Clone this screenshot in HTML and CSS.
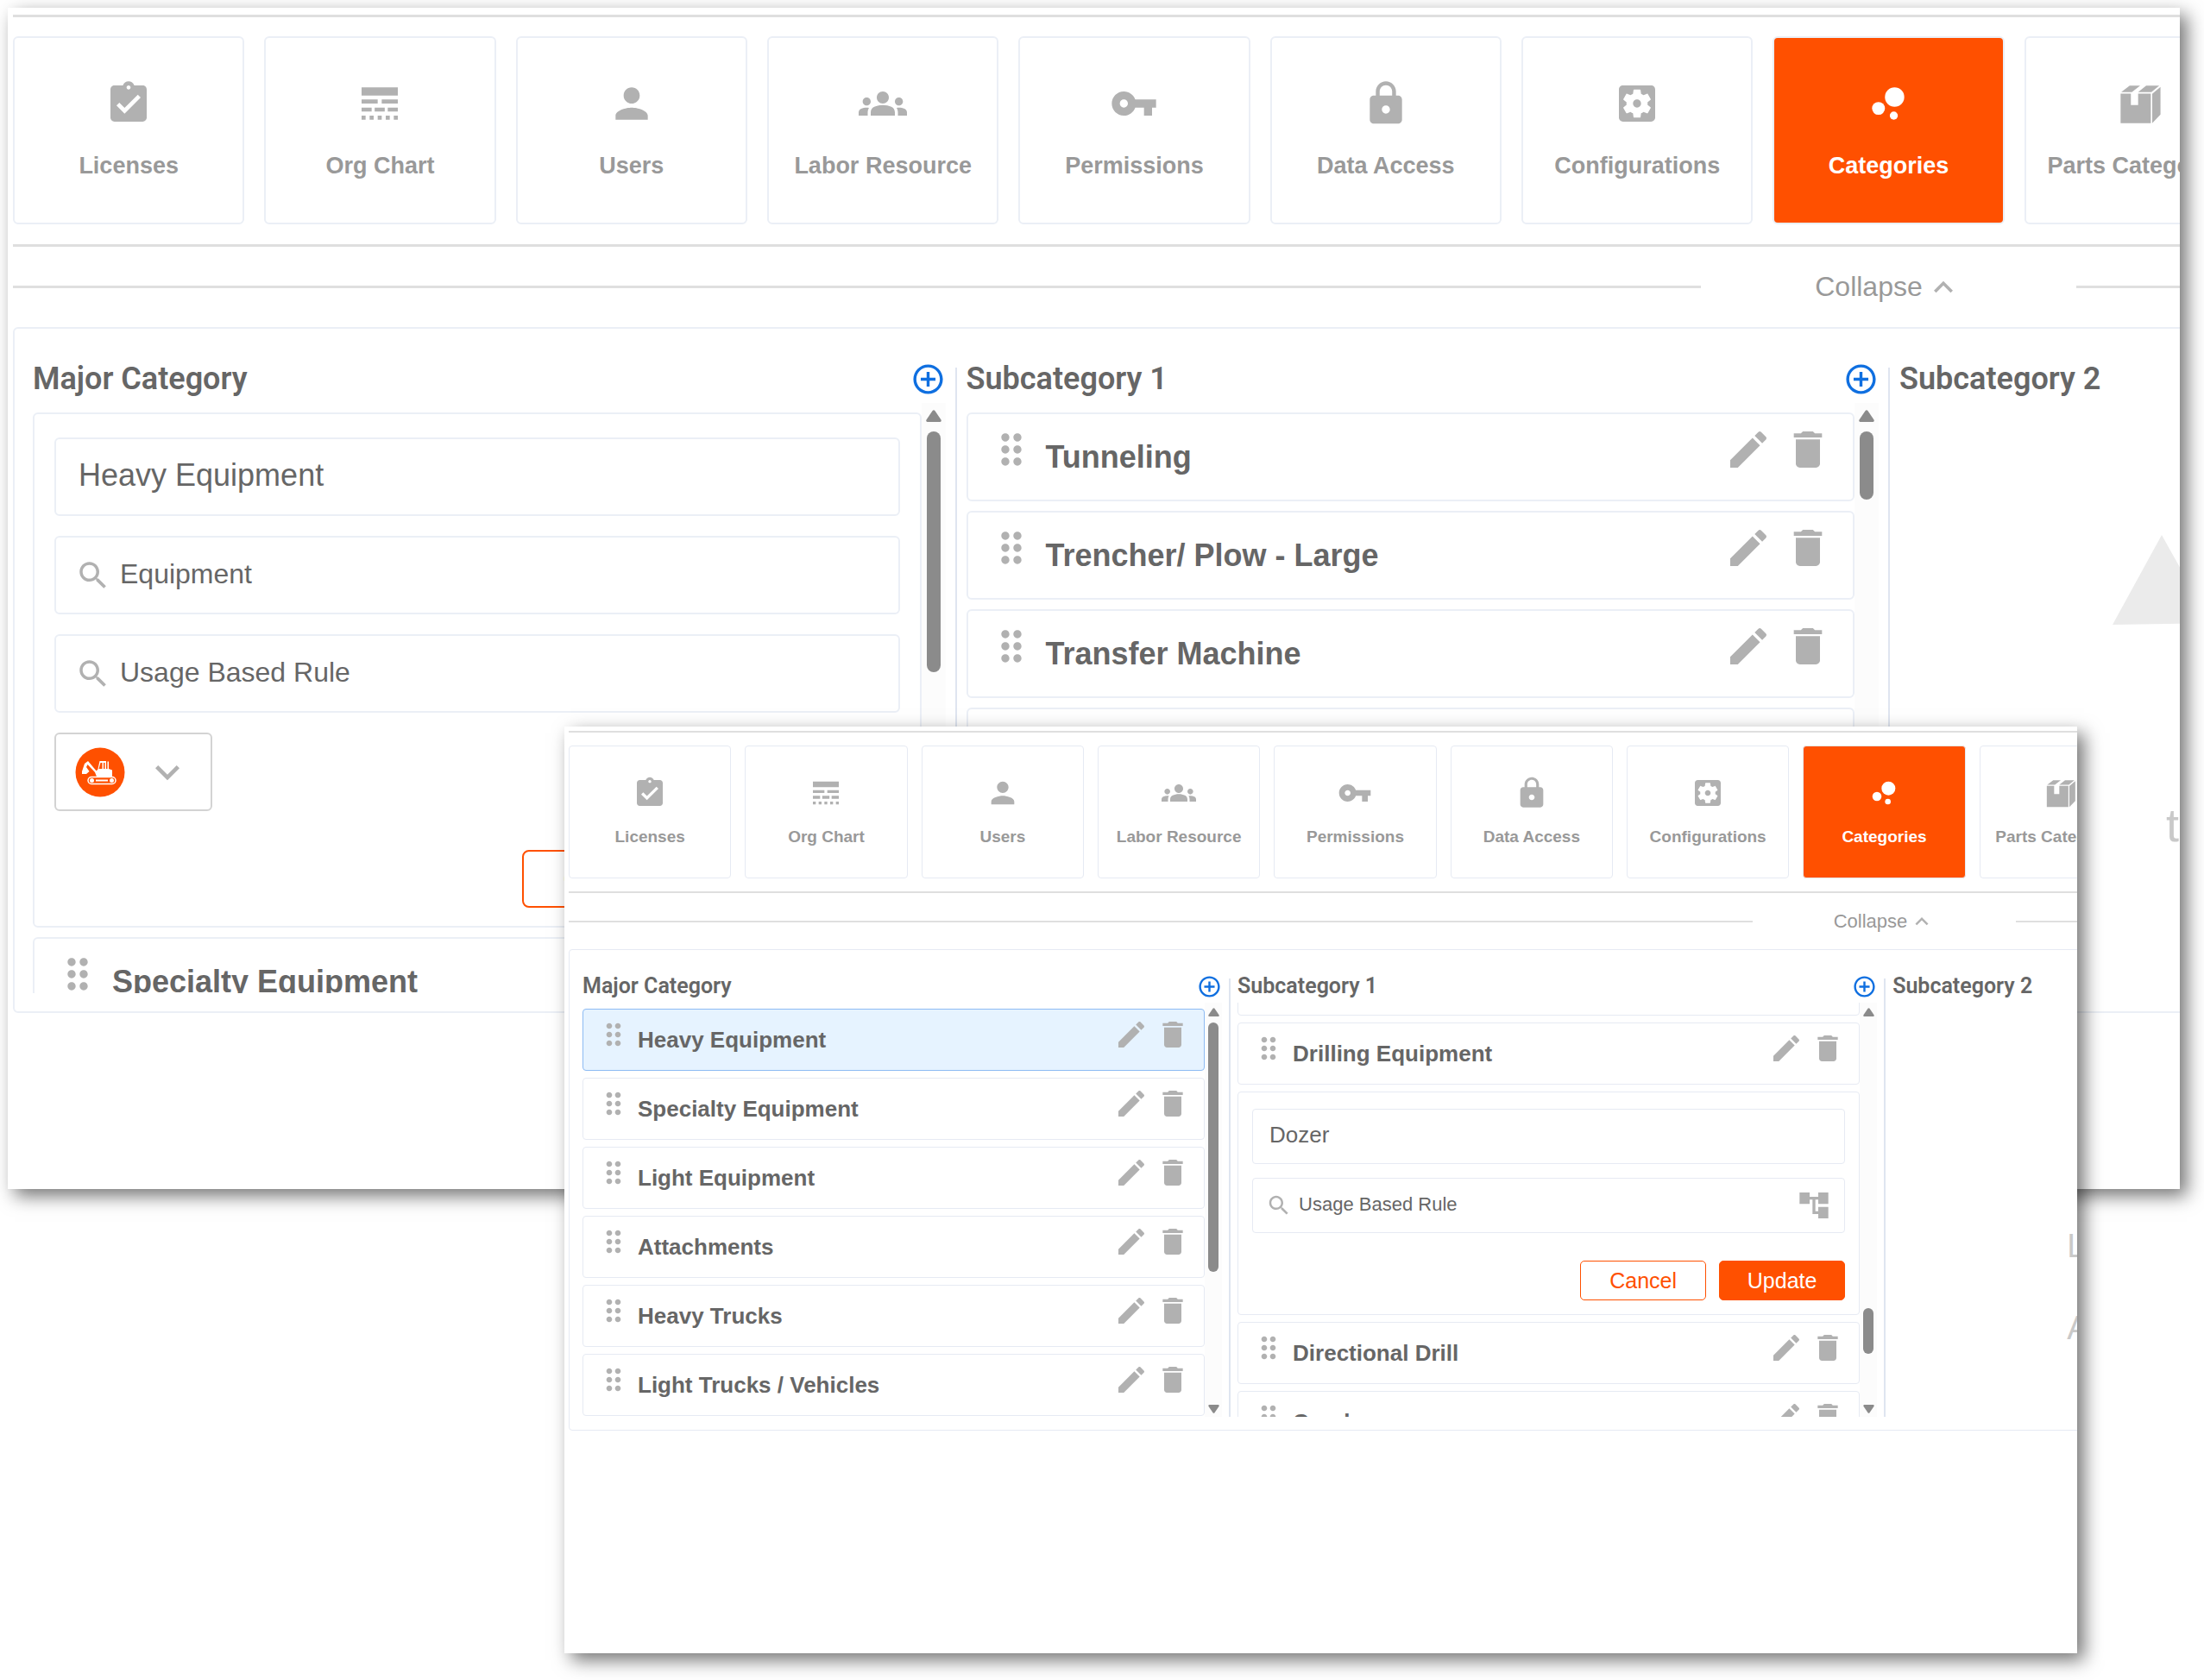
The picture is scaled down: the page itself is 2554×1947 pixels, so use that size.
FILE: index.html
```html
<!DOCTYPE html>
<html lang="en">
<head>
  <meta charset="UTF-8">
  <title>Categories</title>
  <link rel="stylesheet" href="styles.css">
</head>
<body>

  <!-- shared icons -->
  <svg class="sprite" aria-hidden="true">
    <symbol id="i-licenses" viewBox="0 0 24 24"><path d="M19 3h-4.18C14.4 1.84 13.3 1 12 1s-2.4.84-2.82 2H5c-1.1 0-2 .9-2 2v14c0 1.1.9 2 2 2h14c1.1 0 2-.9 2-2V5c0-1.1-.9-2-2-2zm-7 0c.55 0 1 .45 1 1s-.45 1-1 1-1-.45-1-1 .45-1 1-1zm-2 14l-4-4 1.41-1.41L10 14.17l6.59-6.59L18 9l-8 8z"/></symbol>
    <symbol id="i-org" viewBox="0 0 24 24"><path d="M3 16h5v-2H3v2zm6.5 0h5v-2h-5v2zm6.5 0h5v-2h-5v2zM3 20h2v-2H3v2zm4 0h2v-2H7v2zm4 0h2v-2h-2v2zm4 0h2v-2h-2v2zm4 0h2v-2h-2v2zM3 12h8v-2H3v2zm10 0h8v-2h-8v2zM3 4v4h18V4H3z"/></symbol>
    <symbol id="i-user" viewBox="0 0 24 24"><path d="M12 12c2.21 0 4-1.79 4-4s-1.79-4-4-4-4 1.79-4 4 1.79 4 4 4zm0 2c-2.67 0-8 1.34-8 4v2h16v-2c0-2.66-5.33-4-8-4z"/></symbol>
    <symbol id="i-labor" viewBox="0 0 24 24"><path d="M12 12.75c1.63 0 3.07.39 4.24.9 1.08.48 1.76 1.56 1.76 2.73V18H6v-1.61c0-1.18.68-2.26 1.76-2.73 1.17-.52 2.61-.91 4.24-.91zM4 13c1.1 0 2-.9 2-2s-.9-2-2-2-2 .9-2 2 .9 2 2 2zm1.13 1.1c-.37-.06-.74-.1-1.13-.1-.99 0-1.93.21-2.78.58C.48 14.9 0 15.62 0 16.43V18h4.5v-1.61c0-.83.23-1.61.63-2.29zM20 13c1.1 0 2-.9 2-2s-.9-2-2-2-2 .9-2 2 .9 2 2 2zm4 3.43c0-.81-.48-1.53-1.22-1.85-.85-.37-1.79-.58-2.78-.58-.39 0-.76.04-1.13.1.4.68.63 1.46.63 2.29V18H24v-1.57zM12 6c1.66 0 3 1.34 3 3s-1.34 3-3 3-3-1.34-3-3 1.34-3 3-3z"/></symbol>
    <symbol id="i-key" viewBox="0 0 24 24"><path d="M12.65 10C11.83 7.67 9.61 6 7 6c-3.31 0-6 2.69-6 6s2.69 6 6 6c2.61 0 4.83-1.67 5.65-4H17v4h4v-4h2v-4H12.65zM7 14c-1.1 0-2-.9-2-2s.9-2 2-2 2 .9 2 2-.9 2-2 2z"/></symbol>
    <symbol id="i-lock" viewBox="0 0 24 24"><path d="M18 8h-1V6c0-2.76-2.24-5-5-5S7 3.24 7 6v2H6c-1.1 0-2 .9-2 2v10c0 1.1.9 2 2 2h12c1.1 0 2-.9 2-2V10c0-1.1-.9-2-2-2zm-6 9c-1.1 0-2-.9-2-2s.9-2 2-2 2 .9 2 2-.9 2-2 2zm3.1-9H8.9V6c0-1.71 1.39-3.1 3.1-3.1 1.71 0 3.1 1.39 3.1 3.1v2z"/></symbol>
    <symbol id="i-config" viewBox="0 0 24 24"><path d="M12 10c-1.1 0-2 .9-2 2s.9 2 2 2 2-.9 2-2-.9-2-2-2zm7-7H5c-1.11 0-2 .9-2 2v14c0 1.1.89 2 2 2h14c1.11 0 2-.9 2-2V5c0-1.1-.89-2-2-2zm-1.75 9c0 .23-.02.46-.05.68l1.48 1.16c.13.11.17.3.08.45l-1.4 2.42c-.09.15-.27.21-.43.15l-1.74-.7c-.36.28-.76.51-1.18.69l-.26 1.85c-.03.17-.18.3-.35.3h-2.8c-.17 0-.32-.13-.35-.29l-.26-1.85c-.43-.18-.82-.41-1.18-.69l-1.74.7c-.16.06-.34 0-.43-.15l-1.4-2.42c-.09-.15-.05-.34.08-.45l1.48-1.16c-.03-.23-.05-.46-.05-.69 0-.23.02-.46.05-.68l-1.48-1.16c-.13-.11-.17-.3-.08-.45l1.4-2.42c.09-.15.27-.21.43-.15l1.74.7c.36-.28.76-.51 1.18-.69l.26-1.85c.03-.17.18-.3.35-.3h2.8c.17 0 .32.13.35.29l.26 1.85c.43.18.82.41 1.18.69l1.74-.7c.16-.06.34 0 .43.15l1.4 2.42c.09.15.05.34-.08.45l-1.48 1.16c.03.23.05.46.05.69z"/></symbol>
    <symbol id="i-bubbles" viewBox="0 0 24 24"><circle cx="7.2" cy="14.4" r="3.2"/><circle cx="14.8" cy="18" r="2"/><circle cx="15.2" cy="8.8" r="4.8"/></symbol>
    <symbol id="i-box" viewBox="0 0 24 24"><path d="M2.3 7.1h5.1v5.6H11V7.1h6.3v14.6h-15zM18 7.2l4.1-3.5v13.8L18 21.7zM2.6 6.3l4.2-3.2H12L7.9 6.3zM11 6.3l4-3.2h6.5l-3.9 3.2z"/></symbol>
    <symbol id="i-up" viewBox="0 0 24 24"><path d="M12 8l-6 6 1.41 1.41L12 10.83l4.59 4.58L18 14z"/></symbol>
    <symbol id="i-down" viewBox="0 0 24 24"><path d="M16.59 8.59L12 13.17 7.41 8.59 6 10l6 6 6-6z"/></symbol>
    <symbol id="i-add" viewBox="0 0 24 24"><path d="M13 7h-2v4H7v2h4v4h2v-4h4v-2h-4V7zm-1-5C6.48 2 2 6.48 2 12s4.48 10 10 10 10-4.48 10-10S17.52 2 12 2zm0 18c-4.41 0-8-3.59-8-8s3.59-8 8-8 8 3.59 8 8-3.59 8-8 8z"/></symbol>
    <symbol id="i-drag" viewBox="0 0 24 24"><path d="M11 18c0 1.1-.9 2-2 2s-2-.9-2-2 .9-2 2-2 2 .9 2 2zm-2-8c-1.1 0-2 .9-2 2s.9 2 2 2 2-.9 2-2-.9-2-2-2zm0-6c-1.1 0-2 .9-2 2s.9 2 2 2 2-.9 2-2-.9-2-2-2zm6 4c1.1 0 2-.9 2-2s-.9-2-2-2-2 .9-2 2 .9 2 2 2zm0 2c-1.1 0-2 .9-2 2s.9 2 2 2 2-.9 2-2-.9-2-2-2zm0 6c-1.1 0-2 .9-2 2s.9 2 2 2 2-.9 2-2-.9-2-2-2z"/></symbol>
    <symbol id="i-edit" viewBox="0 0 24 24"><path d="M3 17.25V21h3.75L17.81 9.94l-3.75-3.75L3 17.25zM20.71 7.04c.39-.39.39-1.02 0-1.41l-2.34-2.34c-.39-.39-1.02-.39-1.41 0l-1.83 1.83 3.75 3.75 1.83-1.83z"/></symbol>
    <symbol id="i-trash" viewBox="0 0 24 24"><path d="M6 19c0 1.1.9 2 2 2h8c1.1 0 2-.9 2-2V7H6v12zM19 4h-3.5l-1-1h-5l-1 1H5v2h14V4z"/></symbol>
    <symbol id="i-search" viewBox="0 0 24 24"><path d="M15.5 14h-.79l-.28-.27C15.41 12.59 16 11.11 16 9.5 16 5.91 13.09 3 9.5 3S3 5.91 3 9.5 5.91 16 9.5 16c1.61 0 3.09-.59 4.23-1.57l.27.28v.79l5 4.99L20.49 19l-4.99-5zm-6 0C7.01 14 5 11.99 5 9.5S7.01 5 9.5 5 14 7.01 14 9.5 11.99 14 9.5 14z"/></symbol>
    <symbol id="i-tree" viewBox="0 0 24 24"><path d="M22 11V3h-7v3H9V3H2v8h7V8h2v10h4v3h7v-8h-7v3h-2V8h2v3z"/></symbol>
    <symbol id="i-arrow-up" viewBox="0 0 18 14"><path d="M7.6 1Q9-.6 10.4 1L17.5 11.5Q18.3 13.5 16.5 14H1.5Q-.3 13.5.5 11.5z"/></symbol>
    <symbol id="i-arrow-down" viewBox="0 0 18 14"><path d="M7.6 13Q9 14.6 10.4 13L17.5 2.5Q18.3.5 16.5 0H1.5Q-.3.5.5 2.5z"/></symbol>
    <symbol id="i-excavator" viewBox="0 0 58 58">
      <circle cx="29" cy="29" r="28.5" fill="#ff5000"/>
      <g fill="#fff">
        <path d="M8 28l3-9 4-3 11 13h-3L14.5 20l-1.5 3 3.500 5-3.500 3H8z"/>
        <path d="M23 29l3.500-3.500V25L28.500 16H36v9h1.500v-8.500H39V25l4 1.500V34H25z"/>
        <path d="M29.500 18h2v7H27.500z" fill="#ff5000"/>
        <path d="M33 18h1.500v7H33z" fill="#ff5000"/>
      </g>
      <rect x="15" y="34.500" width="32" height="8" rx="4" fill="none" stroke="#fff" stroke-width="1.500"/>
      <circle cx="19.500" cy="38.500" r="2.500" fill="#fff"/><circle cx="42.500" cy="38.500" r="2.500" fill="#fff"/>
      <path d="M24 37.500h14v2H24z" fill="#fff"/>
    </symbol>
  </svg>

  <main class="window large">
    <nav class="tabs">
      <button class="tab"><svg class="icon"><use href="#i-licenses"/></svg><span>Licenses</span></button>
      <button class="tab"><svg class="icon"><use href="#i-org"/></svg><span>Org Chart</span></button>
      <button class="tab"><svg class="icon"><use href="#i-user"/></svg><span>Users</span></button>
      <button class="tab"><svg class="icon"><use href="#i-labor"/></svg><span>Labor Resource</span></button>
      <button class="tab"><svg class="icon"><use href="#i-key"/></svg><span>Permissions</span></button>
      <button class="tab"><svg class="icon"><use href="#i-lock"/></svg><span>Data Access</span></button>
      <button class="tab"><svg class="icon"><use href="#i-config"/></svg><span>Configurations</span></button>
      <button class="tab active"><svg class="icon"><use href="#i-bubbles"/></svg><span>Categories</span></button>
      <button class="tab"><svg class="icon"><use href="#i-box"/></svg><span>Parts Categories</span></button>
    </nav>
    <div class="collapse"><button>Collapse<svg><use href="#i-up"/></svg></button></div>

    <div class="panel">
      <section class="column">
        <header>
          <h2>Major Category</h2>
          <button class="add" aria-label="Add major category"><svg><use href="#i-add"/></svg></button>
        </header>
        <div class="scroll">
          <div class="list">
            <form class="edit">
              <div class="field"><input class="name" type="text" value="Heavy Equipment" aria-label="Name"></div>
              <div class="field"><svg class="search"><use href="#i-search"/></svg><input type="text" value="Equipment" aria-label="Type"></div>
              <div class="field"><svg class="search"><use href="#i-search"/></svg><input type="text" value="Usage Based Rule" aria-label="Rule"></div>
              <div class="picker">
                <svg class="picture"><use href="#i-excavator"/></svg>
                <svg class="icon"><use href="#i-down"/></svg>
                <select aria-label="Icon"><option>Excavator</option></select>
              </div>
              <div class="actions"><button type="button">Cancel</button><button type="button" class="primary">Update</button></div>
            </form>
            <div class="item">
              <svg class="icon"><use href="#i-drag"/></svg><span>Specialty Equipment</span>
              <button aria-label="Edit"><svg class="icon"><use href="#i-edit"/></svg></button><button aria-label="Delete"><svg class="icon"><use href="#i-trash"/></svg></button>
            </div>
          </div>
          <div class="scrollbar"><svg><use href="#i-arrow-up"/></svg><div class="track"><div class="thumb" style="height: 279px"></div></div><svg><use href="#i-arrow-down"/></svg></div>
        </div>
      </section>

      <section class="column">
        <header>
          <h2>Subcategory 1</h2>
          <button class="add" aria-label="Add subcategory"><svg><use href="#i-add"/></svg></button>
        </header>
        <div class="scroll">
          <div class="list">
            <div class="item">
              <svg class="icon"><use href="#i-drag"/></svg><span>Tunneling</span>
              <button aria-label="Edit"><svg class="icon"><use href="#i-edit"/></svg></button><button aria-label="Delete"><svg class="icon"><use href="#i-trash"/></svg></button>
            </div>
            <div class="item">
              <svg class="icon"><use href="#i-drag"/></svg><span>Trencher/ Plow - Large</span>
              <button aria-label="Edit"><svg class="icon"><use href="#i-edit"/></svg></button><button aria-label="Delete"><svg class="icon"><use href="#i-trash"/></svg></button>
            </div>
            <div class="item">
              <svg class="icon"><use href="#i-drag"/></svg><span>Transfer Machine</span>
              <button aria-label="Edit"><svg class="icon"><use href="#i-edit"/></svg></button><button aria-label="Delete"><svg class="icon"><use href="#i-trash"/></svg></button>
            </div>
            <div class="item"></div>
          </div>
          <div class="scrollbar"><svg><use href="#i-arrow-up"/></svg><div class="track"><div class="thumb" style="height: 79px"></div></div><svg><use href="#i-arrow-down"/></svg></div>
        </div>
      </section>

      <section class="column">
        <header><h2>Subcategory 2</h2></header>
        <div class="empty">
          <svg class="hint" viewBox="0 0 114 104"><path d="M57 0l57 102L0 104z"/></svg>
          <p>t</p>
        </div>
      </section>
    </div>
  </main>

  <div class="window small">
    <nav class="tabs">
      <button class="tab"><svg class="icon"><use href="#i-licenses"/></svg><span>Licenses</span></button>
      <button class="tab"><svg class="icon"><use href="#i-org"/></svg><span>Org Chart</span></button>
      <button class="tab"><svg class="icon"><use href="#i-user"/></svg><span>Users</span></button>
      <button class="tab"><svg class="icon"><use href="#i-labor"/></svg><span>Labor Resource</span></button>
      <button class="tab"><svg class="icon"><use href="#i-key"/></svg><span>Permissions</span></button>
      <button class="tab"><svg class="icon"><use href="#i-lock"/></svg><span>Data Access</span></button>
      <button class="tab"><svg class="icon"><use href="#i-config"/></svg><span>Configurations</span></button>
      <button class="tab active"><svg class="icon"><use href="#i-bubbles"/></svg><span>Categories</span></button>
      <button class="tab"><svg class="icon"><use href="#i-box"/></svg><span>Parts Categories</span></button>
    </nav>
    <div class="collapse"><button>Collapse<svg><use href="#i-up"/></svg></button></div>

    <div class="panel">
      <section class="column">
        <header>
          <h2>Major Category</h2>
          <button class="add" aria-label="Add major category"><svg><use href="#i-add"/></svg></button>
        </header>
        <div class="scroll">
          <div class="list">
            <div class="item selected">
              <svg class="icon"><use href="#i-drag"/></svg><span>Heavy Equipment</span>
              <button aria-label="Edit"><svg class="icon"><use href="#i-edit"/></svg></button><button aria-label="Delete"><svg class="icon"><use href="#i-trash"/></svg></button>
            </div>
            <div class="item">
              <svg class="icon"><use href="#i-drag"/></svg><span>Specialty Equipment</span>
              <button aria-label="Edit"><svg class="icon"><use href="#i-edit"/></svg></button><button aria-label="Delete"><svg class="icon"><use href="#i-trash"/></svg></button>
            </div>
            <div class="item">
              <svg class="icon"><use href="#i-drag"/></svg><span>Light Equipment</span>
              <button aria-label="Edit"><svg class="icon"><use href="#i-edit"/></svg></button><button aria-label="Delete"><svg class="icon"><use href="#i-trash"/></svg></button>
            </div>
            <div class="item">
              <svg class="icon"><use href="#i-drag"/></svg><span>Attachments</span>
              <button aria-label="Edit"><svg class="icon"><use href="#i-edit"/></svg></button><button aria-label="Delete"><svg class="icon"><use href="#i-trash"/></svg></button>
            </div>
            <div class="item">
              <svg class="icon"><use href="#i-drag"/></svg><span>Heavy Trucks</span>
              <button aria-label="Edit"><svg class="icon"><use href="#i-edit"/></svg></button><button aria-label="Delete"><svg class="icon"><use href="#i-trash"/></svg></button>
            </div>
            <div class="item">
              <svg class="icon"><use href="#i-drag"/></svg><span>Light Trucks / Vehicles</span>
              <button aria-label="Edit"><svg class="icon"><use href="#i-edit"/></svg></button><button aria-label="Delete"><svg class="icon"><use href="#i-trash"/></svg></button>
            </div>
          </div>
          <div class="scrollbar"><svg><use href="#i-arrow-up"/></svg><div class="track"><div class="thumb" style="height: 289px"></div></div><svg><use href="#i-arrow-down"/></svg></div>
        </div>
      </section>

      <section class="column">
        <header>
          <h2>Subcategory 1</h2>
          <button class="add" aria-label="Add subcategory"><svg><use href="#i-add"/></svg></button>
        </header>
        <div class="scroll">
          <div class="list scrolled">
            <div class="item"></div>
            <div class="item">
              <svg class="icon"><use href="#i-drag"/></svg><span>Drilling Equipment</span>
              <button aria-label="Edit"><svg class="icon"><use href="#i-edit"/></svg></button><button aria-label="Delete"><svg class="icon"><use href="#i-trash"/></svg></button>
            </div>
            <form class="edit">
              <div class="field"><input class="name" type="text" value="Dozer" aria-label="Name"></div>
              <div class="field"><svg class="search"><use href="#i-search"/></svg><input type="text" value="Usage Based Rule" aria-label="Rule"><svg class="icon"><use href="#i-tree"/></svg></div>
              <div class="actions"><button type="button">Cancel</button><button type="button" class="primary">Update</button></div>
            </form>
            <div class="item">
              <svg class="icon"><use href="#i-drag"/></svg><span>Directional Drill</span>
              <button aria-label="Edit"><svg class="icon"><use href="#i-edit"/></svg></button><button aria-label="Delete"><svg class="icon"><use href="#i-trash"/></svg></button>
            </div>
            <div class="item">
              <svg class="icon"><use href="#i-drag"/></svg><span>Crusher</span>
              <button aria-label="Edit"><svg class="icon"><use href="#i-edit"/></svg></button><button aria-label="Delete"><svg class="icon"><use href="#i-trash"/></svg></button>
            </div>
          </div>
          <div class="scrollbar"><svg><use href="#i-arrow-up"/></svg><div class="track"><div class="thumb" style="height: 53px; margin-top: 331px"></div></div><svg><use href="#i-arrow-down"/></svg></div>
        </div>
      </section>

      <section class="column">
        <header><h2>Subcategory 2</h2></header>
        <div class="empty">
          <p>L</p>
          <p>A</p>
        </div>
      </section>
    </div>
  </div>

</body>
</html>
```
FILE: styles.css
```css
* {
  box-sizing: border-box;
}

body {
  margin: 0;
  min-height: 100vh;
  padding: 9px 28px 0 9px;
  position: relative;
  background: #fff;
  color: #666;
  font-family: "Liberation Sans", Arial, sans-serif;
}

.sprite {
  position: absolute;
  width: 0;
  height: 0;
}

svg {
  display: block;
  flex: none;
  fill: #b1b1b1;
}

button {
  margin: 0;
  padding: 0;
  border: 0;
  background: none;
  font-family: inherit;
  cursor: pointer;
}

/* windows */
.window {
  background: #fff;
  overflow: hidden;
  box-shadow: 8px 8px 20px rgba(0, 0, 0, 0.55);
}

.large {
  --line: 3px;
  --border: 2px;
  --border-color: #ebeff6;
  --radius: 6px;
  --icon: 56px;
  --title: 36px;
  --text: 32px;
  --label: 27px;
  --gap: 11px;
  padding: 8px 0 204px 6px;
}

.small {
  --line: 2px;
  --border: 1px;
  --border-color: #e6eaf3;
  --radius: 4px;
  --icon: 40px;
  --title: 26px;
  --text: 22px;
  --label: 19px;
  --gap: 8px;
  position: absolute;
  top: 842px;
  left: 654px;
  right: 147px;
  padding: 5px 0 258px 5px;
}

.icon {
  width: var(--icon);
  height: var(--icon);
}

/* tabs */
.tabs {
  display: grid;
  grid-template-columns: repeat(9, 1fr);
  gap: 23px;
  padding: 22px 0 23px;
  margin-right: -88px;
  border-top: var(--line) solid #dfdfdf;
  border-bottom: var(--line) solid #dfdfdf;
}

.tab {
  display: flex;
  flex-direction: column;
  align-items: center;
  gap: 28px;
  height: 218px;
  padding-top: 48px;
  border: var(--border) solid var(--border-color);
  border-radius: var(--radius);
  color: #999;
  font-size: var(--label);
  font-weight: bold;
  line-height: 32px;
  white-space: nowrap;
}

.tab.active {
  background: #ff5000;
  color: #fff;
}

.tab.active svg {
  fill: #fff;
}

.small .tabs {
  gap: 16px;
  padding: 15px 0;
  margin-right: -75px;
}

.small .tab {
  gap: 20px;
  height: 154px;
  padding-top: 34px;
  line-height: 22px;
}

/* collapse divider */
.collapse {
  display: flex;
  align-items: center;
  height: 93px;
}

.collapse::before,
.collapse::after {
  content: "";
  flex: 1;
  height: var(--line);
  background: #dfdfdf;
}

.collapse::after {
  flex: 0 0 120px;
}

.collapse button {
  display: flex;
  align-items: center;
  justify-content: center;
  gap: 2px;
  width: 435px;
  color: #999;
  font-size: var(--text);
}

.collapse svg {
  width: 44px;
  height: 44px;
}

.small .collapse {
  height: 65px;
}

.small .collapse::after {
  flex-basis: 71px;
}

.small .collapse button {
  width: 305px;
}

.small .collapse svg {
  width: 30px;
  height: 30px;
}

/* panel and columns */
.panel {
  display: grid;
  grid-template-columns: repeat(3, 43.33%);
  margin-right: -10px;
  padding: 45px 0 21px 21px;
  border: var(--border) solid var(--border-color);
  border-radius: var(--radius);
}

.small .panel {
  grid-template-columns: repeat(3, 43.6%);
  padding: 33px 0 15px 15px;
}

.column {
  margin-right: var(--gap);
  padding-right: var(--gap);
  border-right: 2px solid #dfe5f0;
}

.column:last-child {
  border-right: 0;
}

.column header {
  display: flex;
  align-items: center;
  justify-content: space-between;
  height: 26px;
  margin-bottom: 15px;
}

.column h2 {
  margin: 0;
  font-family: Roboto, sans-serif;
  font-size: 36px;
  font-weight: 600;
  line-height: 26px;
}

.add svg {
  width: 41px;
  height: 41px;
  fill: #0f6fe0;
}

.small .column header {
  height: 18px;
  margin-bottom: 10px;
}

.small .column h2 {
  font-size: 25px;
  line-height: 18px;
}

.small .add svg {
  width: 29px;
  height: 29px;
}

.scroll {
  display: flex;
  height: 684px;
}

.small .scroll {
  height: 480px;
}

.list {
  flex: 1;
  min-width: 0;
  padding-top: 11px;
  overflow: hidden;
}

.small .list {
  padding-top: 7px;
}

.scrolled > :first-child {
  margin-top: -64px;
}

/* rows */
.item {
  display: flex;
  height: 103px;
  margin-bottom: var(--gap);
  padding: 13px 24px 0 22px;
  border: var(--border) solid var(--border-color);
  border-radius: var(--radius);
}

.item span {
  flex: 1;
  margin-left: 12px;
  font-size: var(--title);
  font-weight: bold;
  line-height: 74px;
  white-space: nowrap;
}

.item button {
  height: var(--icon);
  margin-left: 13px;
}

.item.selected {
  background: #e6f3ff;
  border-color: #8dbbf3;
}

.small .item {
  height: 72px;
  padding: 9px 16px 0 15px;
}

.small .item span {
  margin-left: 8px;
  line-height: 53px;
}

.small .item button {
  margin-left: 8px;
}

/* edit form */
.edit {
  display: flex;
  flex-direction: column;
  gap: 23px;
  margin-bottom: var(--gap);
  padding: 27px 23px 21px;
  border: var(--border) solid var(--border-color);
  border-radius: var(--radius);
}

.field {
  display: flex;
  align-items: center;
  height: 91px;
  padding: 0 22px;
  border: var(--border) solid var(--border-color);
  border-radius: var(--radius);
}

.field input {
  flex: 1;
  min-width: 0;
  padding: 0 0 2px;
  border: 0;
  outline: 0;
  background: none;
  color: #666;
  font-family: inherit;
  font-size: var(--text);
}

.field .name {
  padding: 0 4px 4px;
  font-size: var(--title);
}

.search {
  width: 42px;
  height: 42px;
  margin-right: 10px;
}

.picker {
  position: relative;
  display: flex;
  align-items: center;
  gap: 21px;
  width: 183px;
  height: 91px;
  padding-left: 22px;
  border: 2px solid #d3d3d3;
  border-radius: 6px;
}

.picture {
  width: 58px;
  height: 58px;
}

.picker select {
  position: absolute;
  inset: 0;
  width: 100%;
  opacity: 0;
}

.actions {
  display: flex;
  justify-content: flex-end;
  gap: 22px;
  margin-top: 22px;
}

.actions button {
  width: 208px;
  height: 67px;
  border: 2px solid #ff5000;
  border-radius: 8px;
  color: #ff5000;
  font-size: 36px;
}

.actions .primary {
  background: #ff5000;
  color: #fff;
}

.small .edit {
  gap: 16px;
  padding: 19px 16px 16px;
}

.small .field {
  height: 64px;
  padding: 0 15px;
}

.small .search {
  width: 30px;
  height: 30px;
  margin-right: 8px;
}

.small .actions {
  gap: 15px;
  margin-top: 16px;
}

.small .actions button {
  width: 146px;
  height: 46px;
  border-width: 1px;
  border-radius: 5px;
  font-size: 25px;
}

/* scrollbar */
.scrollbar {
  display: flex;
  flex-direction: column;
  align-items: center;
  width: 28px;
  padding: 8px 0;
  background: #fcfcfc;
}

.scrollbar svg {
  width: 18px;
  height: 14px;
  fill: #8b8b8b;
}

.track {
  flex: 1;
  padding: 11px 0;
}

.thumb {
  width: 16px;
  border-radius: 8px;
  background: #8b8b8b;
}

.small .scrollbar {
  width: 20px;
  padding: 6px 0 4px;
}

.small .scrollbar svg {
  width: 13px;
  height: 10px;
}

.small .track {
  padding: 7px 0;
}

.small .thumb {
  width: 12px;
  border-radius: 6px;
}

/* empty column */
.empty {
  padding: 153px 0 0 247px;
  color: #c9c9c9;
  font-size: 54px;
  line-height: 64px;
}

.empty p {
  margin: 0;
}

.hint {
  width: 114px;
  height: 104px;
  margin-bottom: 200px;
  fill: #ebebeb;
}

.large .empty p {
  padding-left: 62px;
}

.small .empty {
  padding: 235px 0 0 202px;
  font-size: 38px;
  line-height: 95px;
}
```
